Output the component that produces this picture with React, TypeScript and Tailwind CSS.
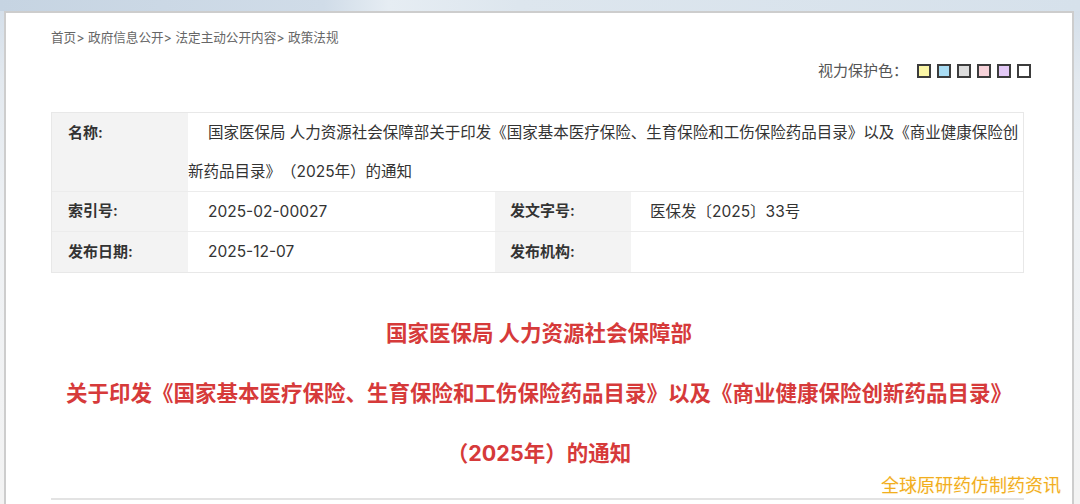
import React from "react";

const swatches = ["bg-[#fbf6a6]", "bg-[#a9dcf3]", "bg-[#dcdcdc]", "bg-[#f6d2d9]", "bg-[#e3c9f6]", "bg-[#ffffff]"];

export default function App() {
  return (
    <div className="relative h-[504px] w-[1080px] overflow-hidden bg-[linear-gradient(180deg,#d3dee9_0px,#e3e9ef_80px,#eef1f4_220px,#f3f3f3_100%)] font-['Inter','Noto_Sans_CJK_SC',sans-serif] [text-spacing-trim:space-all]">
      {/* top sky strip */}
      <div className="h-[11px] w-full bg-[linear-gradient(90deg,#c6d4e2_0%,#d0dce8_30%,#e6edf3_36%,#dde6ee_48%,#d6e1eb_100%)]" />

      {/* main panel */}
      <div className="ml-[4px] w-[1070px] h-[520px] border-2 border-[#cdcdcd] bg-white">
        {/* breadcrumb */}
        <div className="pt-[15px] pl-[45px] text-[12.6px] leading-[20px] text-[#666]">
          首页&gt; 政府信息公开&gt; 法定主动公开内容&gt; 政策法规
        </div>

        {/* eye-protection colours */}
        <div className="mt-[13px] flex h-[20px] items-center justify-end pr-[41px]">
          <span className="text-[15px] leading-[20px] text-[#555]">视力保护色：</span>
          <div className="ml-[9px] flex items-center gap-[6px]">
            {swatches.map((c, i) => (
              <span key={i} className={`block h-[14px] w-[14px] border-2 border-[#3c3c3c] ${c}`} />
            ))}
          </div>
        </div>

        {/* info table */}
        <div className="ml-[45px] mt-[31px] w-[973px] border border-[#e8e8e8] text-[#333]">
          <div className="grid grid-cols-[136px_835px] border-b border-[#ececec]">
            <div className="bg-[#f3f3f3] pl-[16px] text-[15px] font-semibold leading-[39px]">名称:</div>
            <div className="whitespace-nowrap text-[15.5px] leading-[39px]">
              <div className="pl-[20px]">
                国家医保局 人力资源社会保障部关于印发《国家基本医疗保险、生育保险和工伤保险药品目录》以及《商业健康保险创
              </div>
              <div>新药品目录》（2025年）的通知</div>
            </div>
          </div>
          <div className="grid h-[40px] grid-cols-[136px_307px_136px_392px] border-b border-[#ececec]">
            <div className="flex items-center bg-[#f3f3f3] pl-[16px] text-[15px] font-semibold">索引号:</div>
            <div className="flex items-center pl-[20px] text-[15.5px]">2025-02-00027</div>
            <div className="flex items-center bg-[#f3f3f3] pl-[15px] text-[15px] font-semibold">发文字号:</div>
            <div className="flex items-center pl-[19px] text-[15.5px]">医保发〔2025〕33号</div>
          </div>
          <div className="grid h-[40px] grid-cols-[136px_307px_136px_392px]">
            <div className="flex items-center bg-[#f3f3f3] pl-[16px] text-[15px] font-semibold">发布日期:</div>
            <div className="flex items-center pl-[20px] text-[15.5px]">2025-12-07</div>
            <div className="flex items-center bg-[#f3f3f3] pl-[15px] text-[15px] font-semibold">发布机构:</div>
            <div className="flex items-center pl-[19px] text-[15.5px]"></div>
          </div>
        </div>

        {/* title */}
        <div className="mt-[30px] text-center text-[21.5px] font-bold leading-[60px] text-[#d63a3a]">
          <p>国家医保局 人力资源社会保障部</p>
          <p className="whitespace-nowrap">
            关于印发《国家基本医疗保险、生育保险和工伤保险药品目录》以及《商业健康保险创新药品目录》
          </p>
          <p>（2025年）的通知</p>
        </div>

        {/* next box top rule */}
        <div className="ml-[45px] mt-[15px] h-[20px] w-[973px] border-t-2 border-[#e3e3e3] bg-white" />
      </div>

      {/* watermark overlay */}
      <div className="absolute left-[881px] top-[475px] whitespace-nowrap text-[18px] leading-[22px] text-[#f2ae1e] [text-shadow:0_0_2px_#fff6d8]">
        全球原研药仿制药资讯
      </div>
    </div>
  );
}
